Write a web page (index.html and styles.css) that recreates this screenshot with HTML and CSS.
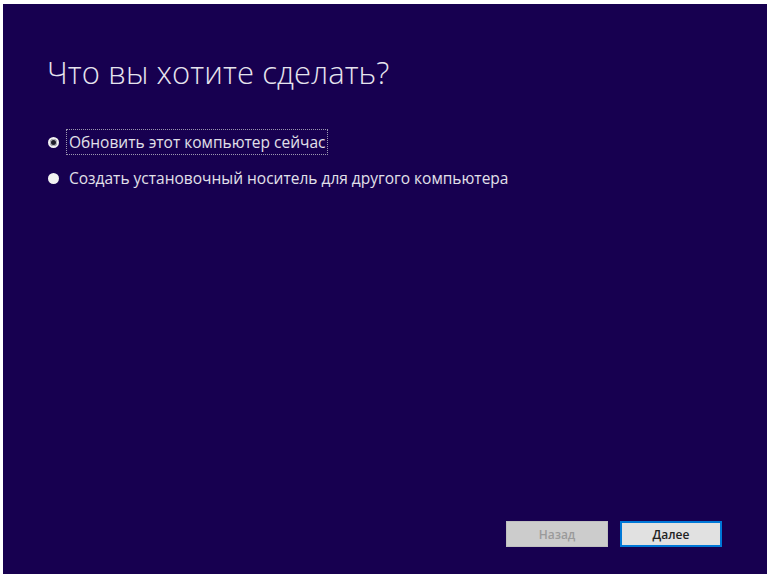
FILE: index.html
```html
<!DOCTYPE html>
<html lang="ru">
<head>
  <meta charset="UTF-8">
  <meta name="viewport" content="width=device-width, initial-scale=1.0">
  <title>Программа установки Windows</title>
  <link rel="stylesheet" href="styles.css">
</head>
<body>
  <div class="setup">
    <h1>Что вы хотите сделать?</h1>

    <div class="options">
      <label class="option">
        <span class="radio checked"></span>
        <span class="option-text focused">Обновить этот компьютер сейчас</span>
      </label>
      <label class="option">
        <span class="radio"></span>
        <span class="option-text">Создать установочный носитель для другого компьютера</span>
      </label>
    </div>

    <div class="buttons">
      <button class="btn" disabled>Назад</button>
      <button class="btn btn-default">Далее</button>
    </div>
  </div>
</body>
</html>
```

FILE: styles.css
```css
body {
  margin: 0;
  background-color: #ffffff;
  font-family: "Open Sans", "Noto Sans", Arial, sans-serif;
}

.setup {
  width: 764px;
  height: 570px;
  margin: 4px 0 0 3px;
  background-color: #170050;
  display: flex;
  flex-direction: column;
  box-sizing: border-box;
  padding: 47px 0 0 44px;
}

h1 {
  margin: 0 0 38px 0;
  font-size: 31px;
  font-weight: 300;
  color: #e6e4ee;
  letter-spacing: 0.1px;
}

.options {
  display: flex;
  flex-direction: column;
  gap: 14px;
}

.option {
  display: flex;
  align-items: center;
  gap: 10px;
  color: #e2e0ea;
  font-size: 15.5px;
  height: 22px;
}

.radio {
  width: 11px;
  height: 11px;
  border-radius: 50%;
  background-color: #f2f2f2;
  box-sizing: border-box;
  flex-shrink: 0;
  margin-left: 1px;
}

.radio.checked {
  border: 2px solid #f2f2f2;
  background-color: #1e1e2a;
  box-shadow: inset 0 0 0 1px #bdbdc6;
}

.option-text {
  padding: 1px 2px;
  margin-left: -2px;
}

.focused {
  outline: 1px dotted #9c98b0;
}

.buttons {
  margin-top: auto;
  display: flex;
  justify-content: flex-end;
  gap: 12px;
  padding: 0 45px 27px 0;
}

.btn {
  width: 102px;
  height: 26px;
  font-family: "Open Sans", "Noto Sans", Arial, sans-serif;
  font-size: 12px;
  font-weight: 600;
  border: 1px solid #adadad;
  background-color: #e1e1e1;
  color: #222222;
  padding: 0;
}

.btn:disabled {
  background-color: #cccccc;
  border-color: #bfbfbf;
  color: #9a9a9a;
}

.btn-default {
  border: 2px solid #0078d7;
}
```
